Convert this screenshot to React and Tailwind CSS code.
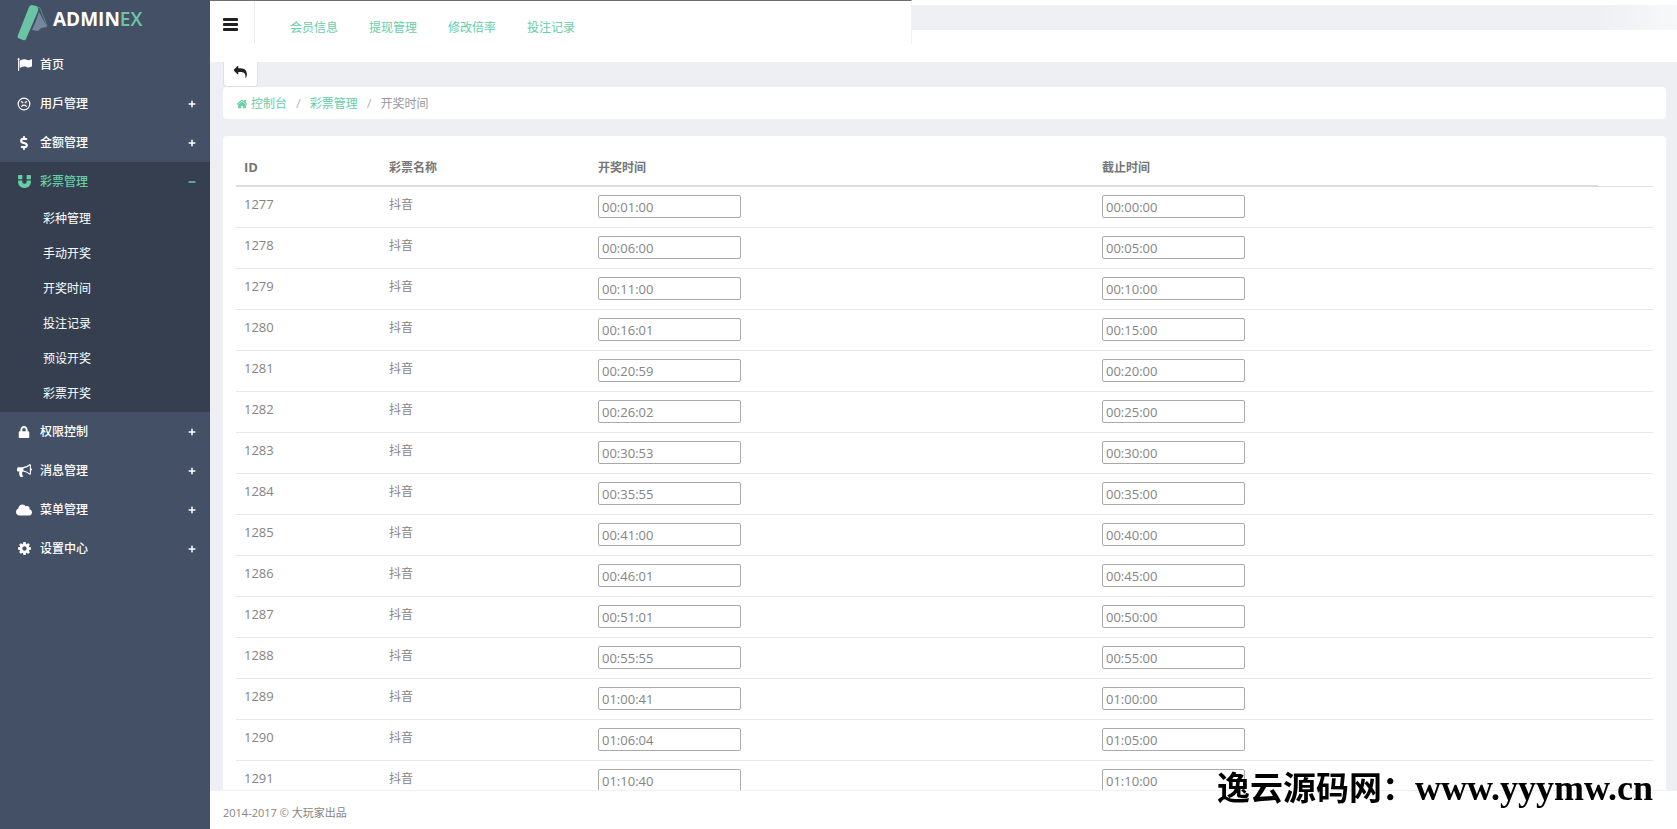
import { FaCloud, FaDollarSign, FaLock, FaPlus, FaMinus } from "react-icons/fa";
import { Angry } from "lucide-react";

const PATHS = {
  flag: "M320 256q0 72-64 110v1266q0 13-9.5 22.5t-22.5 9.5h-64q-13 0-22.5-9.5t-9.5-22.5v-1266q-64-38-64-110 0-53 37.5-90.5t90.5-37.5 90.5 37.5 37.5 90.5zm1472 64v763q0 25-12.5 38.5t-39.5 27.5q-215 116-369 116-61 0-123.5-22t-108.5-48-115.5-48-142.5-22q-192 0-464 146-17 9-33 9-26 0-45-19t-19-45v-742q0-32 31-55 21-14 79-43 236-120 421-120 107 0 200 29t219 88q38 19 88 19 54 0 117.5-21t110-47 88-47 54.5-21q26 0 45 19t19 45z",
  magnet: "M1664 832v128q0 201-98.5 362t-274 251.5-395.5 90.5-395.5-90.5-274-251.5-98.5-362v-128q0-26 19-45t45-19h384q26 0 45 19t19 45v128q0 52 23.5 90t53.5 57 71 30 64 13 44 2 44-2 64-13 71-30 53.5-57 23.5-90v-128q0-26 19-45t45-19h384q26 0 45 19t19 45zm-1024-640v384q0 26-19 45t-45 19h-384q-26 0-45-19t-19-45v-384q0-26 19-45t45-19h384q26 0 45 19t19 45zm1024 0v384q0 26-19 45t-45 19h-384q-26 0-45-19t-19-45v-384q0-26 19-45t45-19h384q26 0 45 19t19 45z",
  bullhorn: "M1664 640q53 0 90.5 37.5t37.5 90.5-37.5 90.5-90.5 37.5v384q0 52-38 90t-90 38q-417-347-812-380-58 19-91 66t-31 100.5 40 92.5q-20 33-23 65.5t6 58 33.5 55 48 50 61.5 50.5q-29 58-111.5 83t-168.5 11.5-132-55.5q-7-23-29.5-87.5t-32-94.5-23-89-15-101 3.5-98.5 22-110.5h-122q-66 0-113-47t-47-113v-192q0-66 47-113t113-47h480q435 0 896-384 52 0 90 38t38 90v384zm-128 604v-954q-394 302-768 343v270q377 42 768 341z",
  cog: "M1152 896q0-106-75-181t-181-75-181 75-75 181 75 181 181 75 181-75 75-181zm512-109v222q0 12-8 23t-20 13l-185 28q-19 54-39 91 35 50 107 138 10 12 10 25t-9 23q-27 37-99 108t-94 71q-12 0-26-9l-138-108q-44 23-91 38-16 136-29 186-7 28-36 28h-222q-14 0-24.5-8.5t-11.5-21.5l-28-184q-49-16-90-37l-141 107q-10 9-25 9-14 0-25-11-126-114-165-168-7-10-7-23 0-12 8-23 15-21 51-66.5t54-70.5q-27-50-41-99l-183-27q-13-2-21-12.5t-8-23.5v-222q0-12 8-23t19-13l186-28q14-46 39-92-40-57-107-138-10-12-10-24 0-10 9-23 26-36 98.5-107.5t94.5-71.5q13 0 26 10l138 107q44-23 91-38 16-136 29-186 7-28 36-28h222q14 0 24.5 8.5t11.5 21.5l28 184q49 16 90 37l142-107q9-9 24-9 13 0 25 10 129 119 165 170 7 8 7 22 0 12-8 23-15 21-51 66.5t-54 70.5q26 50 41 98l183 28q13 2 21 12.5t8 23.5z",
  home: "M1472 992v480q0 26-19 45t-45 19h-384v-384h-256v384h-384q-26 0-45-19t-19-45v-480q0-1 .5-3t.5-3l575-474 575 474q1 2 1 6zm223-69l-62 74q-8 9-21 11h-3q-13 0-21-7l-692-577-692 577q-12 8-24 7-13-2-21-11l-62-74q-8-10-7-23.5t11-21.5l719-599q32-26 76-26t76 26l244 204v-195q0-14 9-23t23-9h192q14 0 23 9t9 23v408l219 182q10 8 11 21.5t-7 23.5z",
  reply: "M1792 1120q0 166-127 451-3 7-10.5 24t-13.5 30-13 22q-12 17-28 17-15 0-23.5-10t-8.5-25q0-9 2.5-26.5t2.5-23.5q5-68 5-123 0-112-19.5-200.5t-54-153.5-89-112-116-79.5-142-50-161-26-179.5-7.5h-224v256q0 26-19 45t-45 19-45-19l-512-512q-19-19-19-45t19-45l512-512q19-19 45-19t45 19 19 45v256h224q713 0 875 403 53 134 53 333z",
};

function Glyph({ name, className }) {
  return (
    <svg viewBox="0 0 1792 1792" fill="currentColor" className={className} aria-hidden="true">
      <path d={PATHS[name]} />
    </svg>
  );
}

const MENU = [
  { label: "首页", icon: <Glyph name="flag" className="size-[15px]" /> },
  { label: "用戶管理", icon: <Angry className="size-[14px]" strokeWidth={2} />, toggle: true },
  { label: "金额管理", icon: <FaDollarSign className="size-[14px]" />, toggle: true },
  {
    label: "彩票管理",
    icon: <Glyph name="magnet" className="size-[15px]" />,
    toggle: true,
    children: ["彩种管理", "手动开奖", "开奖时间", "投注记录", "预设开奖", "彩票开奖"],
  },
  { label: "权限控制", icon: <FaLock className="size-3" />, toggle: true },
  { label: "消息管理", icon: <Glyph name="bullhorn" className="size-[15px]" />, toggle: true },
  { label: "菜单管理", icon: <FaCloud className="size-4" />, toggle: true },
  { label: "设置中心", icon: <Glyph name="cog" className="size-[15px]" />, toggle: true },
];

const TOP_LINKS = ["会员信息", "提现管理", "修改倍率", "投注记录"];

const ROWS = [
  { id: 1277, open: "00:01:00", close: "00:00:00" },
  { id: 1278, open: "00:06:00", close: "00:05:00" },
  { id: 1279, open: "00:11:00", close: "00:10:00" },
  { id: 1280, open: "00:16:01", close: "00:15:00" },
  { id: 1281, open: "00:20:59", close: "00:20:00" },
  { id: 1282, open: "00:26:02", close: "00:25:00" },
  { id: 1283, open: "00:30:53", close: "00:30:00" },
  { id: 1284, open: "00:35:55", close: "00:35:00" },
  { id: 1285, open: "00:41:00", close: "00:40:00" },
  { id: 1286, open: "00:46:01", close: "00:45:00" },
  { id: 1287, open: "00:51:01", close: "00:50:00" },
  { id: 1288, open: "00:55:55", close: "00:55:00" },
  { id: 1289, open: "01:00:41", close: "01:00:00" },
  { id: 1290, open: "01:06:04", close: "01:05:00" },
  { id: 1291, open: "01:10:40", close: "01:10:00" },
];

function Logo() {
  return (
    <a href="#" className="flex h-[45px] items-start pl-4 pt-1">
      <svg width="34" height="38" viewBox="0 0 34 38" aria-hidden="true">
        <path d="M23 8 L31 23 L25 24 L22 27 L16 26 L20 17 Z" fill="#76889f" />
        <path d="M19 2 L24 4 L31 22" fill="none" stroke="#55907f" strokeWidth="1" />
        <path d="M13 3 Q14 1 16 1 L20 2 Q23 4 22 7 L10 35 Q9 37 7 36 L2 34 Q1 33 2 31 Z" fill="#6bc5a4" />
      </svg>
      <span className="ml-[3px] mt-[3px] text-[19px] leading-[24px] font-bold text-white">
        ADMIN<span className="font-semibold text-[#6bc5a4]">EX</span>
      </span>
    </a>
  );
}

function MenuItem({ item }) {
  const open = Boolean(item.children);
  return (
    <li className={open ? "bg-[#353f4f]" : ""}>
      <a
        href="#"
        className={`flex h-[39px] items-center pl-4 pr-[14px] text-[12px] font-medium ${open ? "text-[#65cea7]" : "text-white"}`}
      >
        <span className="flex w-4 justify-center">{item.icon}</span>
        <span className="ml-2 flex-1">{item.label}</span>
        {item.toggle && (open ? <FaMinus className="size-2" /> : <FaPlus className="size-2" />)}
      </a>
      {open && (
        <ul className="pb-px">
          {item.children.map((label) => (
            <li key={label}>
              <a href="#" className="flex h-[35px] items-center pl-[43px] text-[12px] text-white">
                {label}
              </a>
            </li>
          ))}
        </ul>
      )}
    </li>
  );
}

function Header() {
  return (
    <header className="flex h-[62px] shrink-0 items-start bg-white">
      <div className="flex h-11 min-w-[702px] border-t border-r border-t-[#6f6f6f] border-r-[#eff0f4]">
        <button aria-label="切换菜单" className="flex w-[45px] items-center border-r border-[#e9eaee] pl-[13px] pt-[3px] text-[#212121]">
          <svg width="15" height="13" viewBox="0 0 15 13" fill="currentColor" aria-hidden="true">
            <rect width="15" height="3" rx="1" />
            <rect y="5" width="15" height="3" rx="1" />
            <rect y="10" width="15" height="3" rx="1" />
          </svg>
        </button>
        <nav className="flex items-center gap-[30px] pl-[35px] pt-[10px] text-[12px] text-[#65cea7]">
          {TOP_LINKS.map((label) => (
            <a key={label} href="#" className="w-[49px] whitespace-nowrap">
              {label}
            </a>
          ))}
        </nav>
      </div>
      <div className="mt-[5px] h-[25px] flex-1 bg-linear-to-r from-[#eef0f3] from-90% to-[#f7f8fa]" />
    </header>
  );
}

function TimeInput({ value, label }) {
  return (
    <input
      type="text"
      defaultValue={value}
      aria-label={label}
      className="block h-[23px] w-[143px] rounded-[2px] border border-[#a9a9a9] bg-white px-[3px] text-[13px] text-[#868484]"
    />
  );
}

function TimeTable() {
  return (
    <table className="w-full table-fixed border-separate border-spacing-0 text-left text-[#868484]">
      <colgroup>
        <col className="w-[145px]" />
        <col className="w-[209px]" />
        <col />
        <col />
        <col className="w-[55px]" />
      </colgroup>
      <thead>
        <tr className="h-[37px] text-[12px] font-bold text-[#767676] *:border-[#dddddd] *:px-2">
          <th className="border-b-2 text-[13px]">ID</th>
          <th className="border-b-2">彩票名称</th>
          <th className="border-b-2">开奖时间</th>
          <th className="border-b-2">截止时间</th>
          <td className="border-b" />
        </tr>
      </thead>
      <tbody>
        {ROWS.map((row) => (
          <tr key={row.id} className="h-[41px] align-top *:border-b *:border-[#e8e8e8] *:px-2 *:pt-2">
            <td className="text-[13px] leading-[18px]">{row.id}</td>
            <td className="text-[12px] leading-5">抖音</td>
            <td>
              <TimeInput value={row.open} label={`${row.id} 开奖时间`} />
            </td>
            <td>
              <TimeInput value={row.close} label={`${row.id} 截止时间`} />
            </td>
            <td />
          </tr>
        ))}
      </tbody>
    </table>
  );
}

export default function App() {
  return (
    <div className="flex h-screen overflow-hidden bg-[#edeff3] font-['Open_Sans','Noto_Sans_CJK_SC',sans-serif]">
      <aside className="w-[210px] shrink-0 bg-[#445065]">
        <Logo />
        <ul>
          {MENU.map((item) => (
            <MenuItem key={item.label} item={item} />
          ))}
        </ul>
      </aside>

      <div className="flex min-w-0 flex-1 flex-col">
        <Header />

        <main className="min-h-0 flex-1 overflow-y-auto pl-[13px] pr-[11px] [scrollbar-width:none]">
          <button
            aria-label="返回"
            className="flex h-[25px] w-[35px] items-center justify-center rounded-b-sm border border-t-0 border-[#dfe0e4] bg-white pb-1 text-[#222]"
          >
            <Glyph name="reply" className="size-[13px]" />
          </button>

          {/* Breadcrumb */}
          <nav className="flex h-8 items-center rounded bg-white px-[13px] pt-px text-[12px]">
            <Glyph name="home" className="mr-[3px] size-3 text-[#65cea7]" />
            <a href="#" className="text-[#65cea7]">控制台</a>
            <span className="px-[9px] text-[13px] text-[#b5b5b5]">/</span>
            <a href="#" className="text-[#65cea7]">彩票管理</a>
            <span className="px-[9px] text-[13px] text-[#b5b5b5]">/</span>
            <span className="text-[#999]">开奖时间</span>
          </nav>

          <section className="mt-[17px] rounded bg-white px-[13px] pt-[14px]">
            <TimeTable />
          </section>
        </main>

        <footer className="h-[39px] shrink-0 border-t border-[#f0f0f2] bg-white px-[13px] pt-3 text-[11px] leading-5 text-[#868484]">
          2014-2017 © 大玩家出品
        </footer>
      </div>

      {/* Watermark */}
      <div className="pointer-events-none fixed right-6 bottom-[17px] flex items-baseline leading-[48px] font-bold text-black">
        <span className="font-['Noto_Sans_CJK_SC',sans-serif] text-[33px]">逸云源码网：</span>
        <span className="font-['Liberation_Serif',serif] text-[36px]">www.yyymw.cn</span>
      </div>
    </div>
  );
}
